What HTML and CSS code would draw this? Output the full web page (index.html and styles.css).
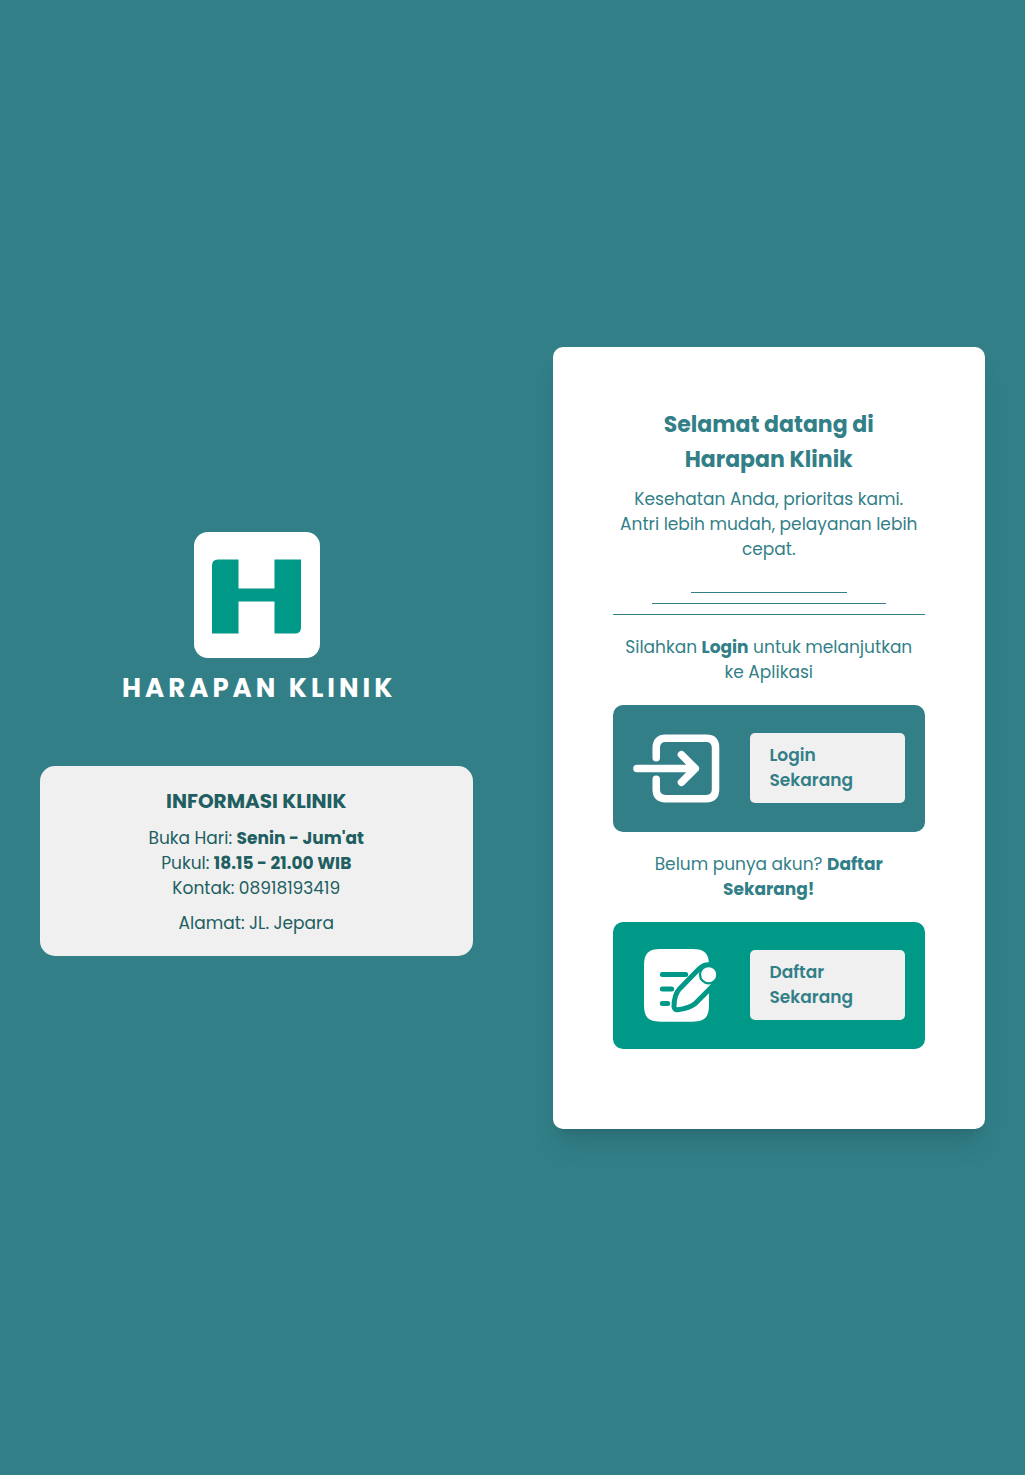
FILE: index.html
```
<!DOCTYPE html>
<html lang="id">
<head>
  <meta charset="utf-8">
  <meta name="viewport" content="width=device-width, initial-scale=1">
  <title>Harapan Klinik</title>
  <link rel="stylesheet" href="styles.css">
</head>
<body>
  <main class="page">
    <section class="intro">
      <div class="brand">
        <svg class="brand-logo" viewBox="0 0 126 126" aria-hidden="true">
          <rect width="126" height="126" rx="14" fill="#fff"/>
          <path fill="#009887" d="M24 27.500H44.500V56.500H80.500V27.500H107V95.500Q107 101.500 101 101.500H80.500V69.500H44.500V101.500H18V33.500Q18 27.500 24 27.500Z"/>
        </svg>
        <h1 class="brand-name">HARAPAN KLINIK</h1>
      </div>
      <div class="info">
        <h2 class="info-title">INFORMASI KLINIK</h2>
        <p>Buka Hari: <strong>Senin - Jum'at</strong><br>Pukul: <strong>18.15 - 21.00 WIB</strong><br>Kontak: 08918193419</p>
        <p>Alamat: JL. Jepara</p>
      </div>
    </section>

    <section class="welcome">
      <div class="card">
        <h2 class="card-title">Selamat datang di<br>Harapan Klinik</h2>
        <p class="card-lead">Kesehatan Anda, prioritas kami.<br>Antri lebih mudah, pelayanan lebih cepat.</p>
        <div class="rules" aria-hidden="true">
          <span class="rule rule-short"></span>
          <span class="rule rule-medium"></span>
          <span class="rule"></span>
        </div>
        <p class="prompt">Silahkan <strong>Login</strong> untuk melanjutkan<br>ke Aplikasi</p>
        <div class="action action-login">
          <svg class="action-icon" viewBox="0 0 88 88" fill="none" stroke="#fff" stroke-width="7.600" stroke-linecap="round" stroke-linejoin="round" aria-hidden="true">
            <path d="M23.500 33V23Q23.500 13.500 33 13.500H74Q83.500 13.500 83.500 23V65Q83.500 74.500 74 74.500H33Q23.500 74.500 23.500 65V55"/>
            <path d="M4 44H63M49 30L63 44L49 58"/>
          </svg>
          <button class="action-button" type="button">Login Sekarang</button>
        </div>
        <p class="prompt">Belum punya akun? <strong>Daftar</strong><br><strong>Sekarang!</strong></p>
        <div class="action action-register">
          <svg class="action-icon" viewBox="-6 6 261 261" aria-hidden="true">
            <path fill="#fff" d="M27 77C27 40 40 27 77 27H172C209 27 222 40 222 77V195C222 232 209 245 172 245H77C40 245 27 232 27 195Z"/>
            <path fill="none" stroke="#009887" stroke-width="15" stroke-linecap="round" d="M82 103.500H152M82 147H110M82 190.500H98"/>
            <path fill="#fff" stroke="#009887" stroke-width="15" stroke-linejoin="round" d="M222 74C207 73 199 80 191 88L134 146C121 160 117 184 117 200Q118 210 128 209C146 207 168 200 180 191L236 135Z"/>
            <path fill="#009887" d="M222 155L236 135L250 110V175H223Z"/>
            <circle cx="221" cy="104" r="26" fill="#fff" stroke="#009887" stroke-width="7"/>
          </svg>
          <button class="action-button" type="button">Daftar Sekarang</button>
        </div>
      </div>
    </section>
  </main>
</body>
</html>
```
FILE: styles.css
```
* {
  box-sizing: border-box;
}

body {
  margin: 0;
  background: #327f88;
  color: #327f88;
  font: 17px/25px Poppins, Inter, "Liberation Sans", sans-serif;
}

h1, h2, p {
  margin: 0;
}

.page {
  display: grid;
  grid-template-columns: 1fr 1fr;
  align-items: center;
  min-height: 100vh;
}

.intro,
.welcome {
  padding: 40px;
}

.brand {
  display: flex;
  flex-direction: column;
  align-items: center;
  gap: 12px;
  padding: 12px 0 0 2px;
  margin-bottom: 60px;
}

.brand-logo {
  width: 126px;
  height: 126px;
}

.brand-name {
  color: #fff;
  font-size: 26px;
  line-height: 36px;
  letter-spacing: 4px;
  text-indent: 4px;
}

.info {
  display: flex;
  flex-direction: column;
  gap: 10px;
  padding: 20px;
  border-radius: 15px;
  background: #f0f0f0;
  color: #205e61;
  text-align: center;
}

.info-title {
  font-size: 20px;
  line-height: 30px;
}

.card {
  padding: 60px 60px 80px;
  border-radius: 10px;
  background: #fff;
  box-shadow: 0 20px 25px -5px rgba(0, 0, 0, 0.1), 0 8px 10px -6px rgba(0, 0, 0, 0.1);
  text-align: center;
}

.card-title {
  margin-bottom: 10px;
  font-size: 22px;
  line-height: 35px;
}

.rules {
  display: flex;
  flex-direction: column;
  align-items: center;
  gap: 10px;
  margin: 30px 0 20px;
}

.rule {
  width: 100%;
  height: 1px;
  background: #327f88;
}

.rule-medium {
  width: 75%;
}

.rule-short {
  width: 50%;
}

.action {
  display: flex;
  align-items: center;
  gap: 30px;
  margin-top: 20px;
  padding: 20px;
  border-radius: 10px;
}

.action + .prompt {
  margin-top: 20px;
}

.action-login {
  background: #327f88;
}

.action-register {
  background: #009887;
}

.action-icon {
  flex: none;
  width: 87px;
  height: 87px;
}

.action-button {
  flex: 1;
  min-width: 0;
  padding: 10px 20px;
  border: 0;
  border-radius: 5px;
  background: #f0f0f0;
  color: #327f88;
  font: inherit;
  font-weight: 600;
  text-align: left;
  cursor: pointer;
}
```
